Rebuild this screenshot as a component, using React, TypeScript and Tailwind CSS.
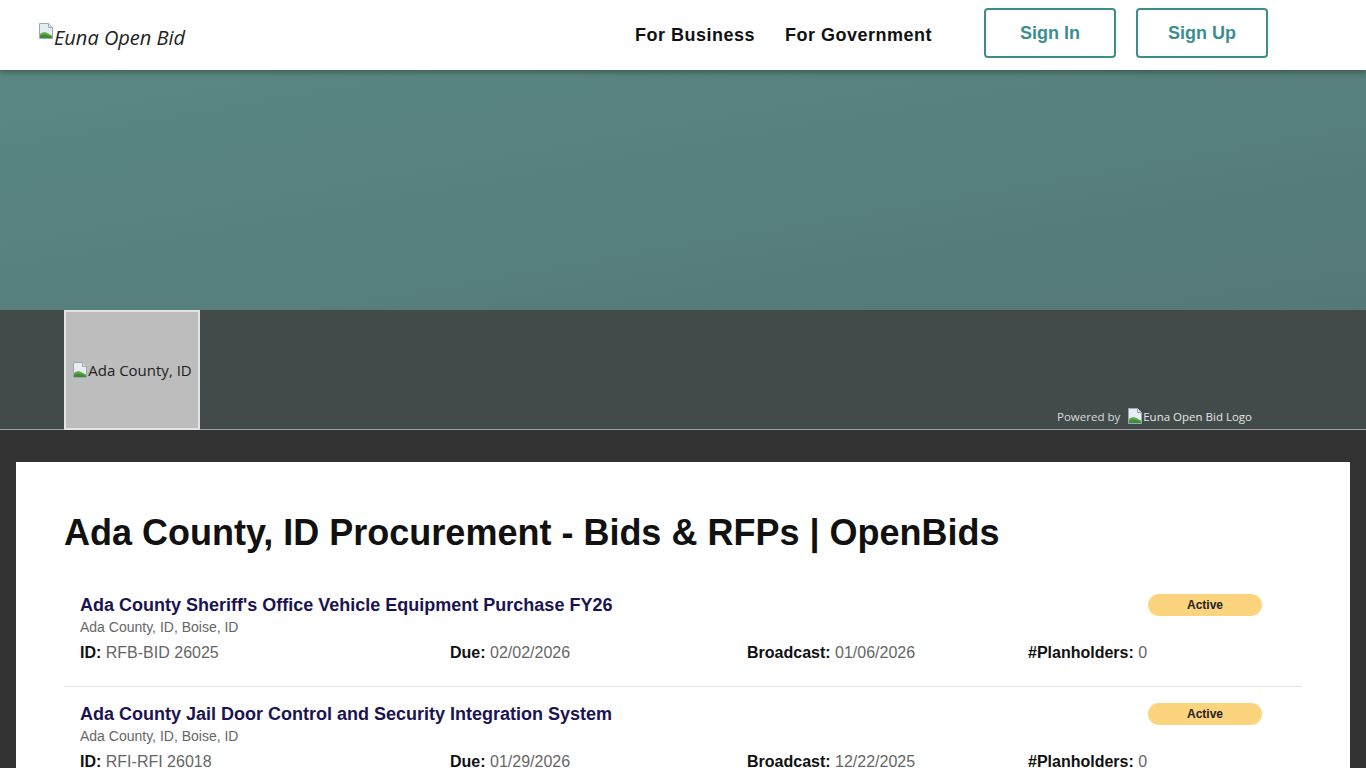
import React from "react";

function BrokenImg({ className = "" }: { className?: string }) {
  return (
    <svg className={className} width="16" height="16" viewBox="0 0 16 16">
      <path d="M1.5 0.5 H10.5 L14.5 4.5 V15.5 H1.5 Z" fill="#e8edf3" stroke="#9aa7b8" />
      <path d="M10.5 0.5 V4.5 H14.5" fill="#d5dde6" stroke="#9aa7b8" />
      <path d="M2 11 C5 8.5 8 9 11 11 L14 12.5 V15 H2 Z" fill="#5fa84a" />
      <path d="M2 13 C5 11 9 11.5 14 14 V15 H2 Z" fill="#3f8a33" />
    </svg>
  );
}

const items = [
  {
    title: "Ada County Sheriff's Office Vehicle Equipment Purchase FY26",
    id: "RFB-BID 26025",
    due: "02/02/2026",
    broadcast: "01/06/2026",
  },
  {
    title: "Ada County Jail Door Control and Security Integration System",
    id: "RFI-RFI 26018",
    due: "01/29/2026",
    broadcast: "12/22/2025",
  },
  {
    title: "Ada County Courthouse HVAC Maintenance Services",
    id: "RFP-RFP 26012",
    due: "01/27/2026",
    broadcast: "12/18/2025",
  },
];

export default function App() {
  return (
    <div className="min-h-screen bg-[#333333] font-['Liberation_Sans',Arial,sans-serif]">
      <header className="relative z-10 flex h-[70px] items-center bg-white pl-[38px] pr-[98px] shadow-[0_2px_6px_rgba(0,0,0,0.35)]">
        <div className="flex items-end">
          <BrokenImg className="mb-[9px]" />
          <span className="font-['Open_Sans',sans-serif] text-[20px] italic leading-none text-[#222]">
            Euna Open Bid
          </span>
        </div>
        <nav className="ml-auto flex items-center">
          <a className="text-[18px] font-bold tracking-[0.5px] text-[#111]">For Business</a>
          <a className="ml-[30px] text-[18px] font-bold tracking-[0.5px] text-[#111]">For Government</a>
          <button className="ml-[52px] mt-[-4px] h-[50px] w-[132px] rounded-[4px] border-2 border-[#3d8d8b] text-[18px] font-bold text-[#3a8f8e]">
            Sign In
          </button>
          <button className="ml-[20px] mt-[-4px] h-[50px] w-[132px] rounded-[4px] border-2 border-[#3d8d8b] text-[18px] font-bold text-[#3a8f8e]">
            Sign Up
          </button>
        </nav>
      </header>

      <div className="h-[240px] bg-linear-to-br from-[#5a8882] to-[#547876]" />

      <div className="flex h-[120px] items-stretch border-b border-[#9da3a3] bg-[#434a4a] pl-[64px] pr-[114px]">
        <div className="mb-[-1px] flex w-[136px] items-center justify-center border-2 border-[#e4e4e4] bg-[#bdbdbd]">
          <BrokenImg />
          <span className="font-['Open_Sans',sans-serif] text-[15px] text-[#222]">Ada County, ID</span>
        </div>
        <div className="ml-auto flex items-end pb-[4px] font-['Open_Sans',sans-serif]">
          <span className="text-[11.5px] text-[#d8dcdc]">Powered by</span>
          <span className="ml-[7px] flex items-center">
            <BrokenImg />
            <span className="text-[11.5px] text-[#e4e6e6]">Euna Open Bid Logo</span>
          </span>
        </div>
      </div>

      <main className="px-[16px] pt-[32px]">
        <div className="bg-white px-[48px] pb-[40px] pt-[49px]">
          <h1 className="text-[36px] font-bold leading-[43px] text-[#111]">
            Ada County, ID Procurement - Bids &amp; RFPs | OpenBids
          </h1>
          <div className="mt-[40px]">
            {items.map((it, i) => (
              <div
                key={i}
                className={`${i === 0 ? "pt-[0px]" : "pt-[16px]"} border-b border-[#e2e2e2] pb-[24px] pl-[16px] pr-[40px]`}
              >
                <div className="flex items-center justify-between">
                  <a className="text-[18px] font-bold leading-[22px] text-[#1b1352]">{it.title}</a>
                  <span className="flex h-[22px] w-[114px] items-center justify-center rounded-full bg-[#fdd47e] text-[12px] font-bold text-[#222]">
                    Active
                  </span>
                </div>
                <div className="mt-[3px] text-[14px] leading-[16px] text-[#666]">Ada County, ID, Boise, ID</div>
                <div className="mt-[9px] grid grid-cols-[370px_297px_281px_1fr] text-[16px] leading-[18px]">
                  <div>
                    <span className="font-bold text-[#111]">ID:</span>{" "}
                    <span className="text-[#666]">{it.id}</span>
                  </div>
                  <div>
                    <span className="font-bold text-[#111]">Due:</span>{" "}
                    <span className="text-[#666]">{it.due}</span>
                  </div>
                  <div>
                    <span className="font-bold text-[#111]">Broadcast:</span>{" "}
                    <span className="text-[#666]">{it.broadcast}</span>
                  </div>
                  <div>
                    <span className="font-bold text-[#111]">#Planholders:</span>{" "}
                    <span className="text-[#666]">0</span>
                  </div>
                </div>
              </div>
            ))}
          </div>
        </div>
      </main>
    </div>
  );
}
